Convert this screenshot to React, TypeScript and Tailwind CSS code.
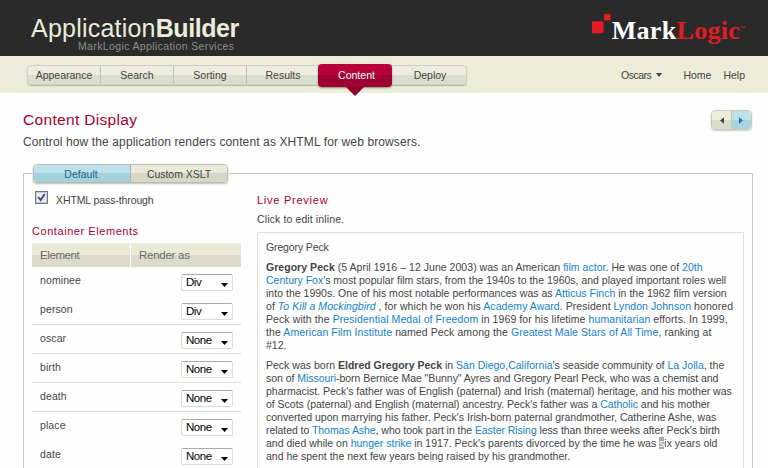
import type { ReactNode } from "react";

const navItems = ["Appearance", "Search", "Sorting", "Results"];

const elements = [
  { name: "nominee", render: "Div", line: false },
  { name: "person", render: "Div", line: true },
  { name: "oscar", render: "None", line: true },
  { name: "birth", render: "None", line: true },
  { name: "death", render: "None", line: true },
  { name: "place", render: "None", line: false },
  { name: "date", render: "None", line: false },
];

function Link({ children }: { children: ReactNode }) {
  return <a className="text-[#1482c6]">{children}</a>;
}

function Line({ className = "", children }: { className?: string; children: ReactNode }) {
  return <span className={`block whitespace-pre ${className}`}>{children}</span>;
}

function Header() {
  return (
    <header className="flex h-14 justify-between bg-[#2a2a2a]">
      <div className="ml-[31px] w-[210px] pt-[15px]">
        <div className="h-[25px] whitespace-nowrap text-[25px] leading-[26px] tracking-[0.22px] text-[#ebecda]">
          Application<b className="tracking-[-0.45px]">Builder</b>
        </div>
        <div className="whitespace-nowrap pl-[47px] text-[10.5px] leading-[12px] tracking-[0.37px] text-[#8e8e86]">
          MarkLogic Application Services
        </div>
      </div>
      <div className="mr-[23px] flex pt-[13px]">
        <svg width="20" height="22" viewBox="0 0 20 22" className="shrink-0">
          <rect x="-0.5" y="8.3" width="12" height="12" rx="1.2" fill="#e31b23" />
          <rect x="12" y="1" width="6.5" height="6.5" rx="0.8" fill="#e31b23" />
        </svg>
        <div className="flex h-9 font-['Liberation_Serif',serif] text-[26px] leading-[35px] font-bold tracking-[0.3px] whitespace-nowrap text-white">
          Mark<span className="text-[#e31b23]">Logic</span>
          <span className="pt-[12px] text-[5px] leading-[6px] font-normal tracking-normal text-[#e31b23]">™</span>
        </div>
      </div>
    </header>
  );
}

function NavBar() {
  return (
    <nav className="flex h-[37px] items-start bg-[#ebecda] pr-[23px] pl-[27px] text-[10.5px] text-[#444]">
      <div className="mt-[9px] flex h-[20px] rounded-[4px] border border-[#cfd0c3] bg-linear-to-b from-[#ecedde] from-50% to-[#dcdecd] to-50% shadow-[0_1px_1px_#b9baae]">
        {navItems.map((item) => (
          <div key={item} className="flex w-[73px] items-center justify-center border-r border-[#bfc0b4] pt-px">
            {item}
          </div>
        ))}
        <div className="z-10 -mt-[2px] -ml-[2px] flex w-[74px] flex-col items-center">
          <div className="flex h-[23px] w-full shrink-0 items-center justify-center rounded-[4px] bg-linear-to-b from-[#b8003c] from-50% to-[#9c0033] to-50% pl-[3px] text-white shadow-[0_1px_2px_#8b8b80]">
            Content
          </div>
          <svg width="18" height="9" viewBox="0 0 18 9" className="shrink-0">
            <path d="M0 0H18L9 9Z" fill="#8f002e" />
          </svg>
        </div>
        <div className="flex w-[74px] items-center justify-center pt-px pl-[2px]">Deploy</div>
      </div>
      <div className="mt-[12px] ml-auto flex items-center leading-[14px]">
        <span className="tracking-[-0.5px]">Oscars</span>
        <svg width="6" height="4" viewBox="0 0 6 4" className="ml-[5px]">
          <path d="M0 0H6L3 4Z" fill="#444" />
        </svg>
        <span className="ml-[21px]">Home</span>
        <span className="ml-[12px]">Help</span>
      </div>
    </nav>
  );
}

function Pager() {
  return (
    <div className="mt-[1px] mr-px flex h-[20px] w-[41px] overflow-hidden rounded-[4px] border border-[#c9cabd] shadow-[0_1px_2px_#ccc]">
      <div className="flex w-[20px] items-center justify-center border-r border-[#c5c6b8] bg-linear-to-b from-[#ebecda] from-50% to-[#dadcc9] to-50%">
        <svg width="4" height="7" viewBox="0 0 5 8">
          <path d="M5 0V8L0 4Z" fill="#444" />
        </svg>
      </div>
      <div className="flex flex-1 items-center justify-center bg-linear-to-b from-[#bfe1ea] from-50% to-[#a8d3df] to-50% pr-[2px]">
        <svg width="4" height="7" viewBox="0 0 5 8">
          <path d="M0 0V8L5 4Z" fill="#286bb0" />
        </svg>
      </div>
    </div>
  );
}

function ContainerElements() {
  return (
    <section className="w-[209px]">
      <div className="flex h-[16px] items-center pl-[3px]">
        <span className="-mt-px flex size-[13px] items-center justify-center border border-[#777] bg-[#eee] shadow-[inset_0_0_0_1px_#ccc]">
          <svg width="9" height="9" viewBox="0 0 9 9">
            <path d="M1.2 4L3.6 7L7.8 1" fill="none" stroke="#3c4f9c" strokeWidth="2" />
          </svg>
        </span>
        <span className="pt-[5px] pl-[8px] text-[10.5px] leading-[13px] tracking-[-0.1px]">XHTML pass-through</span>
      </div>
      <h2 className="mt-[18px] text-[11px] leading-[14px] tracking-[0.56px] text-[#a50034]">Container Elements</h2>
      <div className="mt-[5px] flex h-[24px] items-center bg-linear-to-b from-[#e9ead8] from-50% to-[#dbddca] to-50% text-[11.5px] text-[#6b6b66]">
        <div className="flex h-full w-[99px] items-center border-r border-white pt-[2px] pl-[8px] tracking-[-0.4px]">Element</div>
        <div className="pt-[2px] pl-[8px] tracking-[-0.27px]">Render as</div>
      </div>
      {elements.map((el) => (
        <div
          key={el.name}
          className={`flex h-[29px] items-start justify-between pr-[8px] pl-[8px] ${el.line ? "border-b border-[#ddd]" : ""}`}
        >
          <span className="pt-[6px] text-[10.5px] leading-[14px] tracking-[0.1px]">{el.name}</span>
          <span className="mt-[7px] flex h-[17px] w-[52px] items-center justify-between rounded-[2px] border border-[#ddd] border-t-[#aaa] bg-white pt-px pr-[4px] pl-[4px] text-[11.5px] leading-none tracking-[-0.45px] text-black">
            {el.render}
            <svg width="7" height="4" viewBox="0 0 7 4" className="mt-[3px]">
              <path d="M0 0H7L3.5 4Z" fill="#000" />
            </svg>
          </span>
        </div>
      ))}
    </section>
  );
}

function LivePreview() {
  return (
    <section className="ml-[16px] w-[487px] pt-[3px]">
      <h2 className="text-[11px] leading-[14px] tracking-[0.75px] text-[#a50034]">Live Preview</h2>
      <p className="mt-[5px] text-[10.5px] leading-[14px] tracking-[0.12px]">Click to edit inline.</p>
      <div className="mt-[6px] h-[260px] border border-[#ddd] pt-[8px] pl-[8px] text-[10.5px] leading-[13px]">
        <p className="tracking-[-0.13px]">Gregory Peck</p>
        <p className="mt-[7px]">
          <Line className="tracking-[0.04px]"><b>Gregory Peck</b> (5 April 1916 – 12 June 2003) was an American <Link>film actor</Link>. He was one of <Link>20th</Link></Line>
          <Line><Link>Century Fox</Link>'s most popular film stars, from the 1940s to the 1960s, and played important roles well</Line>
          <Line className="tracking-[0.02px]">into the 1990s. One of his most notable performances was as <Link>Atticus Finch</Link> in the 1962 film version</Line>
          <Line className="tracking-[0.06px]">of <i><Link>To Kill a Mockingbird</Link></i> , for which he won his <Link>Academy Award</Link>. President <Link>Lyndon Johnson</Link> honored</Line>
          <Line className="tracking-[0.09px]">Peck with the <Link>Presidential Medal of Freedom</Link> in 1969 for his lifetime <Link>humanitarian</Link> efforts. In 1999,</Line>
          <Line className="tracking-[0.09px]">the <Link>American Film Institute</Link> named Peck among the <Link>Greatest Male Stars of All Time</Link>, ranking at</Line>
          <Line>#12.</Line>
        </p>
        <p className="mt-[7px]">
          <Line className="tracking-[0.01px]">Peck was born <b>Eldred Gregory Peck</b> in <Link>San Diego</Link>,<Link>California</Link>'s seaside community of <Link>La Jolla</Link>, the</Line>
          <Line className="tracking-[-0.04px]">son of <Link>Missouri</Link>-born Bernice Mae "Bunny" Ayres and Gregory Pearl Peck, who was a chemist and</Line>
          <Line className="tracking-[-0.02px]">pharmacist. Peck's father was of English (paternal) and Irish (maternal) heritage, and his mother was</Line>
          <Line className="tracking-[-0.02px]">of Scots (paternal) and English (maternal) ancestry. Peck's father was a <Link>Catholic</Link> and his mother</Line>
          <Line>converted upon marrying his father. Peck's Irish-born paternal grandmother, Catherine Ashe, was</Line>
          <Line className="tracking-[-0.05px]">related to <Link>Thomas Ashe</Link>, who took part in the <Link>Easter Rising</Link> less than three weeks after Peck's birth</Line>
          <Line>and died while on <Link>hunger strike</Link> in 1917. Peck's parents divorced by the time he was <span className="bg-[#a8a8ac] text-white">s</span>ix years old</Line>
          <Line>and he spent the next few years being raised by his grandmother.</Line>
        </p>
      </div>
    </section>
  );
}

export default function App() {
  return (
    <div className="h-[468px] w-[768px] overflow-hidden bg-[#fefefe] font-['Liberation_Sans',Arial,sans-serif] text-[#444]">
      <Header />
      <NavBar />
      <main className="pr-[15px] pl-[23px]">
        <div className="flex h-[71px] justify-between pt-[16px]">
          <div>
            <h1 className="pt-px text-[15.5px] leading-[20px] tracking-[0.33px] text-[#a50034]">Content Display</h1>
            <p className="mt-[4px] text-[12px] leading-[16px] tracking-[0.12px]">Control how the application renders content as XHTML for web browsers.</p>
          </div>
          <Pager />
        </div>
        <fieldset className="h-[340px] min-w-0 border border-[#c4c4c4] px-[8px]">
          <legend className="px-[1px]">
            <div className="flex h-[19px] w-[195px] overflow-hidden rounded-[4px] border border-[#b9bbb0] text-[10.5px] shadow-[0_1px_2px_#bbb]">
              <div className="flex w-[97px] items-center justify-center border-r border-[#aab5b3] bg-linear-to-b from-[#bde0e9] from-50% to-[#a5d1dd] to-50% pt-[2px] pr-[2px] text-[#28608f]">Default</div>
              <div className="flex flex-1 items-center justify-center bg-linear-to-b from-[#e9ead9] from-50% to-[#d6d8c4] to-50% pt-[2px] tracking-[-0.03px]">Custom XSLT</div>
            </div>
          </legend>
          <div className="flex pt-[7px]">
            <ContainerElements />
            <LivePreview />
          </div>
        </fieldset>
      </main>
    </div>
  );
}
